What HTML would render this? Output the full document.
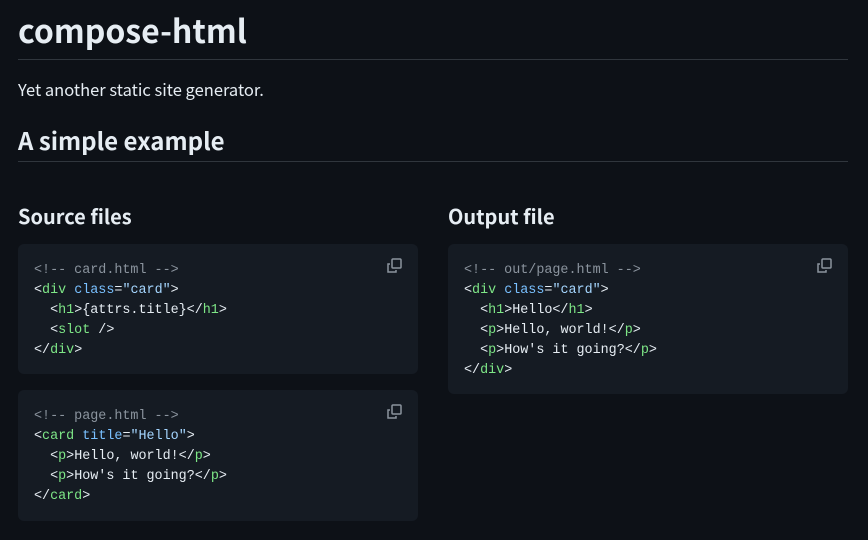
<!DOCTYPE html>
<html><head><style>
body{margin:0;background:#0d1117;color:#e6edf3;font-family:"Noto Sans CJK SC","Liberation Sans",sans-serif;width:868px;height:540px;overflow:hidden}
.w{padding:0 20px 0 18px}
h1{font-size:32px;font-weight:bold;margin:0;padding-top:11px;height:38px;line-height:38px;border-bottom:1px solid #30363d;padding-bottom:10px}
p{font-size:16.5px;margin:0;position:absolute;top:79px;left:18px;line-height:20px}
h2{position:absolute;top:125px;left:18px;right:20px;margin:0;font-size:24px;line-height:30px;border-bottom:1px solid #30363d;padding-bottom:6px}
h3{position:absolute;top:203px;margin:0;font-size:20px;line-height:26px}
pre{position:absolute;margin:0;background:#151b23;border-radius:6px;width:400px;box-sizing:border-box;padding:17px 16px 16px;font-family:"Liberation Mono",monospace;font-size:13.4px;line-height:20px;color:#e6edf3}
.c{color:#8b949e}.t{color:#7ee787}.a{color:#79c0ff}.s{color:#a5d6ff}
svg{position:absolute;right:16px;top:14px}
</style></head><body>
<div class="w"><h1>compose-html</h1></div>
<p>Yet another static site generator.</p>
<h2>A simple example</h2>
<h3 style="left:18px">Source files</h3>
<h3 style="left:448px">Output file</h3>
<pre style="left:18px;top:244px;height:130px"><span class="c">&lt;!-- card.html --&gt;</span>
&lt;<span class="t">div</span> <span class="a">class</span>=<span class="s">"card"</span>&gt;
  &lt;<span class="t">h1</span>&gt;{attrs.title}&lt;/<span class="t">h1</span>&gt;
  &lt;<span class="t">slot</span> /&gt;
&lt;/<span class="t">div</span>&gt;<svg width="16" height="16" viewBox="0 0 16 16" fill="none" stroke="#8b949e" stroke-width="1.5"><rect x="6" y="1" width="9" height="9" rx="1"/><path d="M4 6H2v8h8v-2"/></svg></pre>
<pre style="left:18px;top:390px;height:131px"><span class="c">&lt;!-- page.html --&gt;</span>
&lt;<span class="t">card</span> <span class="a">title</span>=<span class="s">"Hello"</span>&gt;
  &lt;<span class="t">p</span>&gt;Hello, world!&lt;/<span class="t">p</span>&gt;
  &lt;<span class="t">p</span>&gt;How's it going?&lt;/<span class="t">p</span>&gt;
&lt;/<span class="t">card</span>&gt;<svg width="16" height="16" viewBox="0 0 16 16" fill="none" stroke="#8b949e" stroke-width="1.5"><rect x="6" y="1" width="9" height="9" rx="1"/><path d="M4 6H2v8h8v-2"/></svg></pre>
<pre style="left:448px;top:244px;height:150px"><span class="c">&lt;!-- out/page.html --&gt;</span>
&lt;<span class="t">div</span> <span class="a">class</span>=<span class="s">"card"</span>&gt;
  &lt;<span class="t">h1</span>&gt;Hello&lt;/<span class="t">h1</span>&gt;
  &lt;<span class="t">p</span>&gt;Hello, world!&lt;/<span class="t">p</span>&gt;
  &lt;<span class="t">p</span>&gt;How's it going?&lt;/<span class="t">p</span>&gt;
&lt;/<span class="t">div</span>&gt;<svg width="16" height="16" viewBox="0 0 16 16" fill="none" stroke="#8b949e" stroke-width="1.5"><rect x="6" y="1" width="9" height="9" rx="1"/><path d="M4 6H2v8h8v-2"/></svg></pre>
</body></html>
